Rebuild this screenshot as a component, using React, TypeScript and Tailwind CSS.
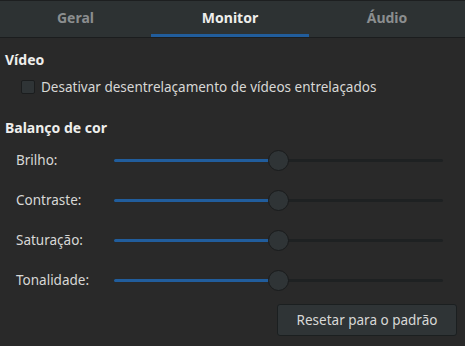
const font = { fontFamily: '"Noto Sans", "Open Sans", sans-serif' };

function Slider({ label, value }: { label: string; value: number }) {
  return (
    <div className="flex items-center h-[40px]">
      <div className="w-[114px] pl-4 text-[13.5px] text-[#d8d8d6]">{label}</div>
      <div className="relative w-[329px] h-[20px] flex items-center">
        <div className="w-full h-[3px] bg-[#1e2122] rounded-full" />
        <div className="absolute left-0 h-[3px] bg-[#215d9c] rounded-full" style={{ width: `${value}%` }} />
        <div
          className="absolute w-[21px] h-[21px] rounded-full bg-[#2f3436] border border-[#191b1c]"
          style={{ left: `calc(${value}% - 11px)` }}
        />
      </div>
    </div>
  );
}

export default function App() {
  const tabs = [
    { t: 'Geral', w: 'w-[151px]' },
    { t: 'Monitor', w: 'w-[158px]' },
    { t: 'Áudio', w: 'w-[156px]' },
  ];
  return (
    <div className="w-[465px] h-[346px] bg-[#292929] text-[#eeeeec] overflow-hidden" style={font}>
      <div className="flex h-[38px] bg-[#2d3233] border-t border-[#1d1f20] border-b border-b-[#1b1d1e]">
        {tabs.map((tab, i) => (
          <div
            key={tab.t}
            className={
              tab.w +
              ' flex items-center justify-center text-[14px] font-bold border-b-[3px] ' +
              (i === 1 ? 'text-[#eeeeec] border-[#215d9c]' : 'text-[#8b8e8f] border-transparent')
            }
          >
            {tab.t}
          </div>
        ))}
      </div>
      <div className="pl-[5px] pt-[11px] text-[14px] font-bold">Vídeo</div>
      <div className="flex items-center pl-[21px] mt-[9px] h-[16px]">
        <div className="w-[14px] h-[14px] rounded-[2px] bg-[#2f3436] border border-[#1b1d1e]" />
        <span className="ml-[6px] text-[13.5px] text-[#d8d8d6]">Desativar desentrelaçamento de vídeos entrelaçados</span>
      </div>
      <div className="pl-[5px] mt-[22px] text-[14px] font-bold">Balanço de cor</div>
      <div className="mt-[2px]">
        <Slider label="Brilho:" value={50} />
        <Slider label="Contraste:" value={50} />
        <Slider label="Saturação:" value={50} />
        <Slider label="Tonalidade:" value={50} />
      </div>
      <div className="flex justify-end pr-[8px] mt-[4px]">
        <button className="w-[180px] h-[32px] rounded-[3px] bg-[#2f3436] border border-[#1b1f20] text-[13.5px] text-[#d8d8d6]">
          Resetar para o padrão
        </button>
      </div>
    </div>
  );
}
